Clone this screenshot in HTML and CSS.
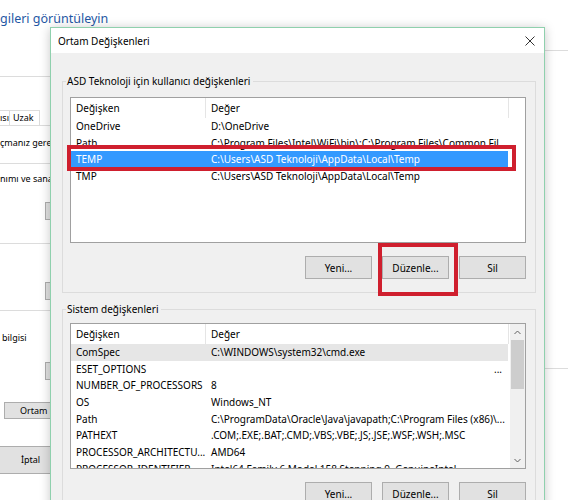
FILE: index.html
```html
<!DOCTYPE html>
<html lang="tr">
<head>
<meta charset="utf-8">
<title>Ortam Değişkenleri</title>
<link rel="stylesheet" href="styles.css">
</head>
<body>
<div class="desktop">
  <div class="bg">
    <h1 class="cp-title">gileri görüntüleyin</h1>
    <div class="panes">
      <div class="left-pane">
        <div class="rule r1"></div>
        <div class="tabs"><span class="tab tab-prev">ısı</span><span class="tab tab-uzak">Uzak</span><span class="tab-fill"></span></div>
        <p class="lp-text t1">çmanız gere</p>
        <div class="rule r2"></div>
        <p class="lp-text t2">nımı ve sana</p>
        <div class="lp-btn b1"></div>
        <div class="rule r3"></div>
        <div class="lp-btn b2"></div>
        <div class="rule r4"></div>
        <p class="lp-text t3">bilgisi</p>
        <div class="lp-btn b3"></div>
        <div class="lp-btn b4">Ortam D</div>
        <div class="lp-btn b5">İptal</div>
      </div>
      <div class="mid"></div>
      <div class="right-pane"><div class="rule rr"></div></div>
    </div>
  </div>

  <div class="dialog">
    <div class="titlebar">
      <span class="title">Ortam Değişkenleri</span>
      <svg class="close" width="10" height="10" viewBox="0 0 10 10"><path d="M0.5 0.5 L9.5 9.5 M9.5 0.5 L0.5 9.5" stroke="#333" stroke-width="1" fill="none"/></svg>
    </div>
    <div class="dlg-body">
      <section class="group">
        <div class="group-head"><span class="gh-lead"></span><span class="gh-label">ASD Teknoloji için kullanıcı değişkenleri</span><span class="gh-line"></span></div>
        <div class="group-body">
          <div class="listview">
            <div class="lv-head"><div class="c1">Değişken</div><div class="c2">Değer</div></div>
            <div class="row"><span class="c1">OneDrive</span><span class="c2">D:\OneDrive</span></div>
            <div class="row"><span class="c1">Path</span><span class="c2">C:\Program Files\Intel\WiFi\bin\;C:\Program Files\Common Fil...</span></div>
            <div class="row selected marked"><span class="c1">TEMP</span><span class="c2">C:\Users\ASD Teknoloji\AppData\Local\Temp</span></div>
            <div class="row"><span class="c1">TMP</span><span class="c2">C:\Users\ASD Teknoloji\AppData\Local\Temp</span></div>
          </div>
          <div class="btns"><button class="btn">Yeni...</button><button class="btn marked-btn">Düzenle...</button><button class="btn">Sil</button></div>
        </div>
      </section>

      <section class="group second">
        <div class="group-head"><span class="gh-lead"></span><span class="gh-label">Sistem değişkenleri</span><span class="gh-line"></span></div>
        <div class="group-body">
          <div class="listview scrolling">
            <div class="lv-main">
              <div class="lv-head"><div class="c1">Değişken</div><div class="c2">Değer</div></div>
              <div class="row hot"><span class="c1">ComSpec</span><span class="c2">C:\WINDOWS\system32\cmd.exe</span></div>
              <div class="row"><span class="c1">ESET_OPTIONS</span><span class="c2 right">...</span></div>
              <div class="row"><span class="c1">NUMBER_OF_PROCESSORS</span><span class="c2">8</span></div>
              <div class="row"><span class="c1">OS</span><span class="c2">Windows_NT</span></div>
              <div class="row"><span class="c1">Path</span><span class="c2">C:\ProgramData\Oracle\Java\javapath;C:\Program Files (x86)\...</span></div>
              <div class="row"><span class="c1">PATHEXT</span><span class="c2">.COM;.EXE;.BAT;.CMD;.VBS;.VBE;.JS;.JSE;.WSF;.WSH;.MSC</span></div>
              <div class="row"><span class="c1">PROCESSOR_ARCHITECTU...</span><span class="c2">AMD64</span></div>
              <div class="row"><span class="c1">PROCESSOR_IDENTIFIER</span><span class="c2">Intel64 Family 6 Model 158 Stepping 9, GenuineIntel</span></div>
            </div>
            <div class="vscroll">
              <div class="sb-arrow"><svg width="7" height="5" viewBox="0 0 7 5"><path d="M0.5 4 L3.5 1 L6.5 4" stroke="#606060" fill="none"/></svg></div>
              <div class="sb-thumb"></div>
              <div class="sb-track"></div>
              <div class="sb-arrow"><svg width="7" height="5" viewBox="0 0 7 5"><path d="M0.5 1 L3.5 4 L6.5 1" stroke="#606060" fill="none"/></svg></div>
            </div>
          </div>
          <div class="btns"><button class="btn">Yeni...</button><button class="btn">Düzenle...</button><button class="btn">Sil</button></div>
        </div>
      </section>
    </div>
  </div>
</div>
</body>
</html>
```

FILE: styles.css
```css
html, body {
  margin: 0;
  padding: 0;
  height: 100%;
}
body {
  background: #fff;
  font-family: "Noto Sans", "Open Sans", sans-serif;
  font-size: 10px;
  color: #000;
  overflow: hidden;
}
.desktop {
  position: relative;
  width: 568px;
  height: 500px;
  overflow: hidden;
}

/* ---------- background windows ---------- */
.cp-title {
  margin: 0;
  height: 50px;
  box-sizing: border-box;
  padding-top: 10px;
  font-weight: normal;
  font-size: 12.5px;
  line-height: 18px;
  color: #1f57a4;
  white-space: nowrap;
}
.panes {
  display: grid;
  grid-template-columns: 50px 494px 1fr;
}
.left-pane {
  display: flex;
  flex-direction: column;
  min-width: 0;
  overflow: hidden;
  font-size: 9px;
}
.rule {
  border-top: 1px solid #dcdcdc;
}
.r1 { margin-top: 26px; }
.tabs {
  margin-top: 33px;
  height: 16px;
  box-sizing: border-box;
  display: flex;
  border-bottom: 1px solid #dcdcdc;
  line-height: 14px;
  white-space: nowrap;
}
.tab-prev {
  width: 9px;
  overflow: hidden;
  border-top: 1px solid #dcdcdc;
}
.tab-uzak {
  width: 31px;
  box-sizing: border-box;
  border: 1px solid #dcdcdc;
  border-bottom: none;
  padding-left: 3px;
}
.tab-fill { flex: 1; }
.lp-text {
  margin: 0;
  height: 16px;
  line-height: 16px;
  white-space: nowrap;
}
.t1 { margin-top: 9px; }
.r2 { margin-top: 12px; }
.t2 { margin-top: 7px; }
.lp-btn {
  box-sizing: border-box;
  height: 18px;
  margin-left: 45px;
  width: 60px;
  background: #e1e1e1;
  border: 1px solid #adadad;
  white-space: nowrap;
  flex: none;
}
.b1 { margin-top: 15px; }
.r3 { margin-top: 23px; }
.b2 { margin-top: 38px; }
.r4 { margin-top: 10px; }
.t3 { margin-top: 19px; padding-left: 2px; }
.b3 { margin-top: 16px; }
.b4 {
  margin-top: 22px;
  margin-left: 4px;
  width: 110px;
  height: 17px;
  line-height: 15px;
  padding-left: 15px;
}
.b5 {
  margin-top: 27px;
  margin-left: -7px;
  width: 75px;
  height: 28px;
  line-height: 26px;
  text-align: center;
}
.right-pane .rr { margin-top: 317px; }
.right-pane { border-top: 1px solid #dcdcdc; }

/* ---------- dialog ---------- */
.dialog {
  position: absolute;
  left: 50px;
  top: 27px;
  width: 495px;
  height: 490px;
  box-sizing: border-box;
  border: 1px solid #8fd0ad;
  background: #f0f0f0;
  box-shadow: 0 1px 10px rgba(0, 0, 0, 0.22);
  display: flex;
  flex-direction: column;
}
.titlebar {
  height: 25px;
  flex: none;
  background: #fff;
  display: flex;
  align-items: center;
  justify-content: space-between;
  padding: 0 9px 0 7px;
}
.title { line-height: 14px; }
.close { display: block; }
.dlg-body {
  padding: 20px 8px 0 11px;
}
.group-head {
  display: flex;
  height: 16px;
  line-height: 16px;
}
.gh-lead, .gh-line {
  align-self: flex-end;
  height: 8px;
  border-top: 1px solid #dcdcdc;
  box-sizing: border-box;
}
.gh-lead {
  width: 4px;
  border-left: 1px solid #dcdcdc;
}
.gh-line {
  flex: 1;
  border-right: 1px solid #dcdcdc;
}
.gh-label {
  padding: 0 3px 0 1px;
  white-space: nowrap;
}
.group-body {
  border: 1px solid #dcdcdc;
  border-top: none;
  padding: 8px 9px 13px 7px;
}
.group.second { margin-top: 8px; }
.group.second .group-body { padding-top: 6px; }

.listview {
  height: 146px;
  box-sizing: border-box;
  border: 1px solid #a0a0a0;
  background: #fff;
}
.listview.scrolling {
  display: flex;
  overflow: hidden;
}
.lv-main {
  flex: 1;
  overflow: hidden;
}
.lv-head {
  display: flex;
  height: 20px;
  line-height: 20px;
}
.lv-head .c1, .lv-head .c2 {
  border-right: 1px solid #e5e5e5;
}
.c1 {
  width: 135px;
  box-sizing: border-box;
  padding-left: 5px;
  white-space: nowrap;
  overflow: hidden;
  flex: none;
}
.c2 {
  width: 302px;
  box-sizing: border-box;
  padding-left: 5px;
  white-space: nowrap;
  overflow: hidden;
  flex: none;
}
.lv-head .c2 { width: 303px; }
.c2.right {
  text-align: right;
  padding-right: 6px;
}
.row {
  display: flex;
  width: 437px;
  height: 16.67px;
  line-height: 16.67px;
  position: relative;
}
.row.selected {
  background: #3399ff;
  color: #fff;
}
.row.hot {
  background: #e6e6e6;
}
.row.marked::after {
  content: "";
  position: absolute;
  left: -4px;
  right: -8px;
  top: -6px;
  bottom: -3px;
  border: 4px solid #cf1f2e;
}

.vscroll {
  width: 15px;
  flex: none;
  background: #f0f0f0;
  display: flex;
  flex-direction: column;
}
.sb-arrow {
  height: 16px;
  display: flex;
  align-items: center;
  justify-content: center;
}
.sb-arrow svg { display: block; }
.sb-thumb {
  height: 49px;
  margin: 0 1px;
  background: #cdcdcd;
}
.sb-track { flex: 1; }

.btns {
  display: flex;
  justify-content: flex-end;
  gap: 10px;
  margin-top: 13px;
}
.btn {
  width: 67px;
  height: 23px;
  padding: 0;
  margin: 0;
  background: #e1e1e1;
  border: 1px solid #adadad;
  border-radius: 0;
  font-family: inherit;
  font-size: 10px;
  color: #000;
  position: relative;
}
.marked-btn::after {
  content: "";
  position: absolute;
  left: -5px;
  right: -10px;
  top: -14px;
  bottom: -18px;
  border: 4px solid #cf1f2e;
}
```
